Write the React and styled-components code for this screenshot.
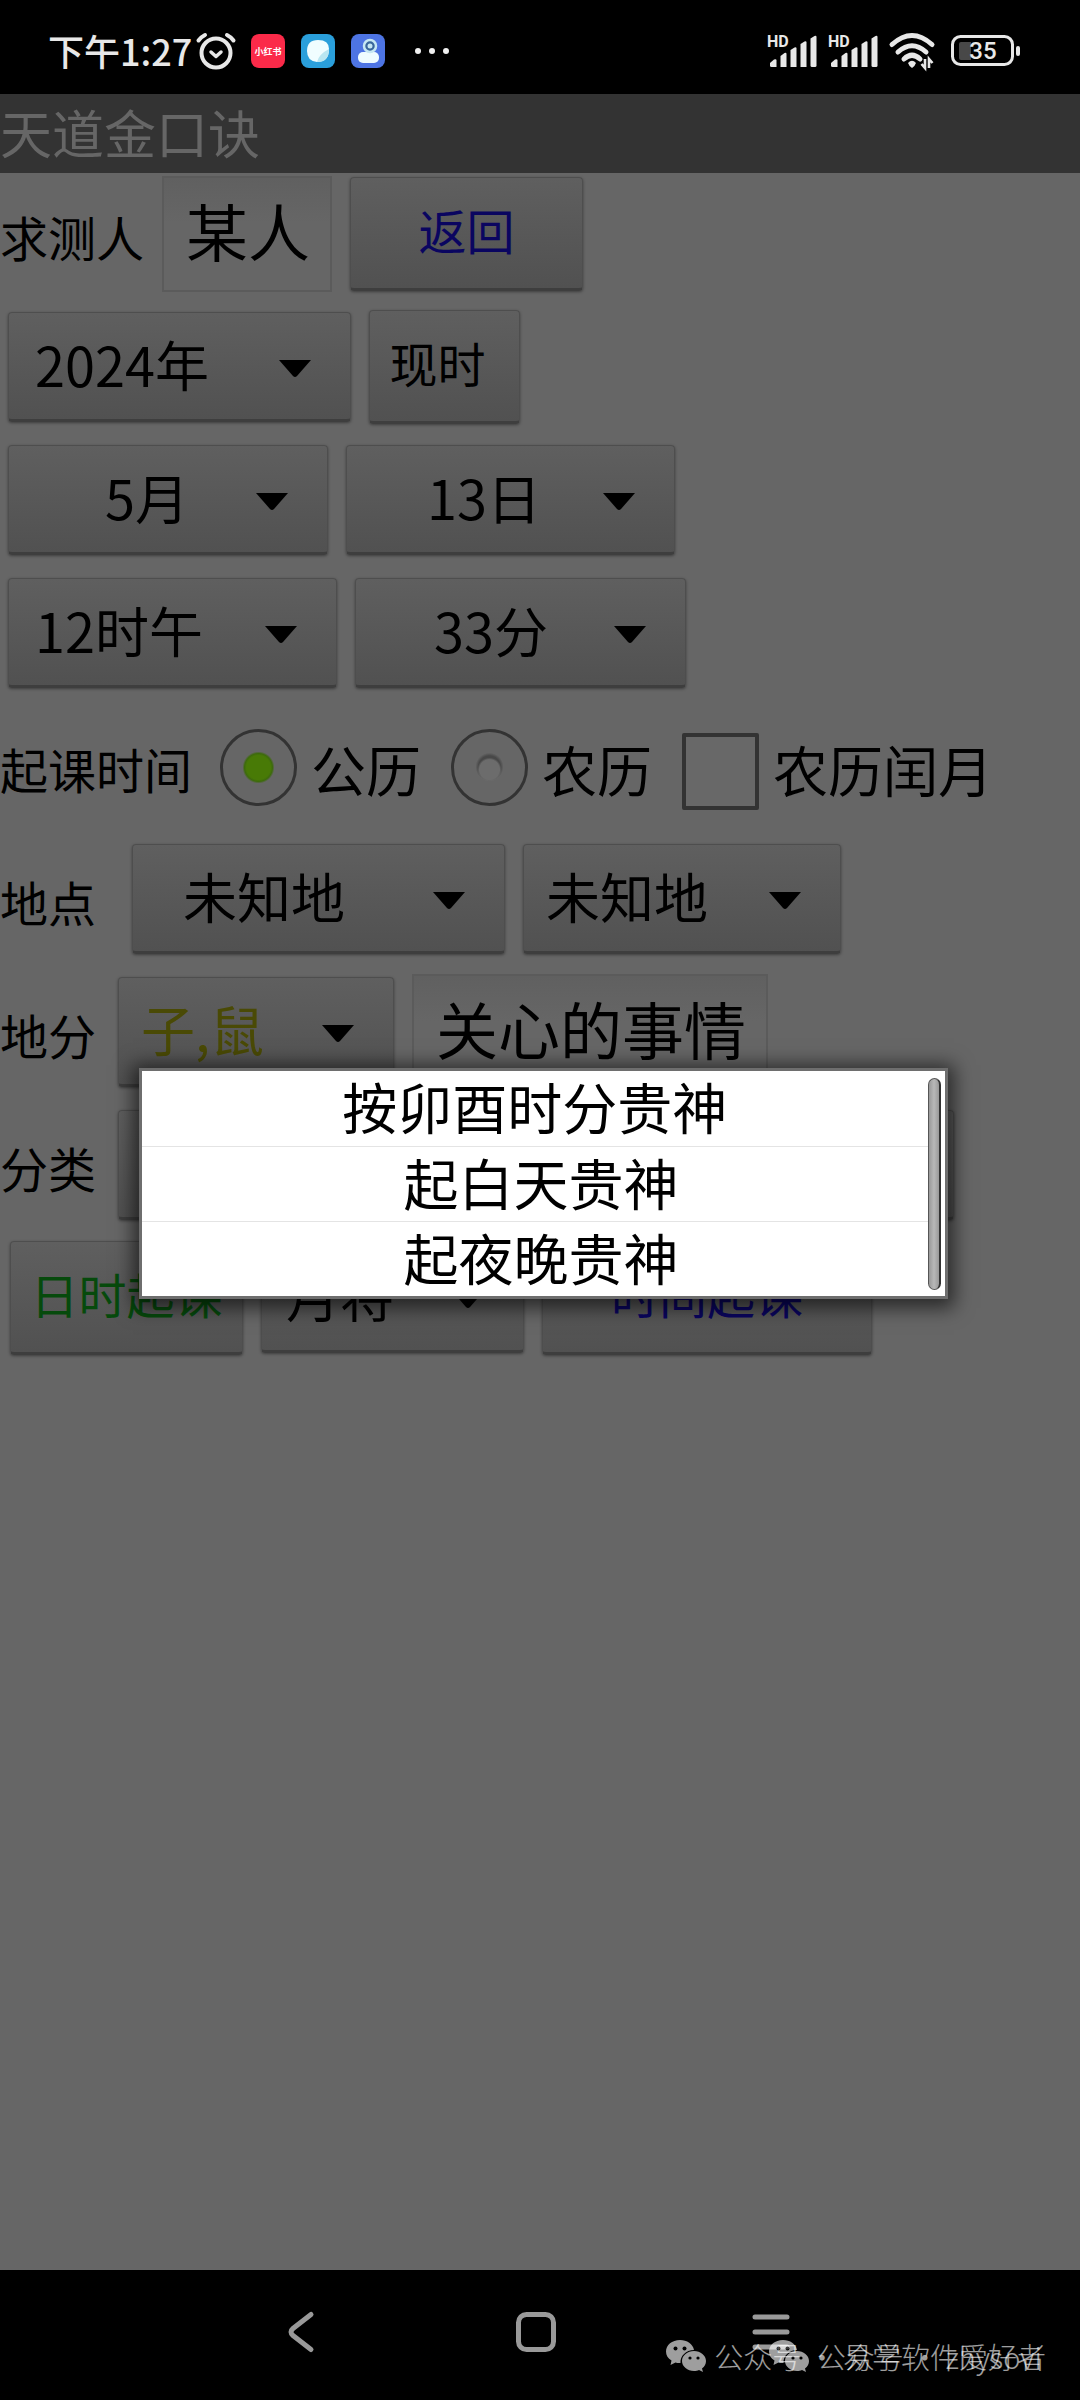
import { useState } from "react";
import styled, { createGlobalStyle } from "styled-components";

function StatusIcons() {
  return (
    <Icons>
      <Signal />
      <Signal />
      <svg width="48" height="38" viewBox="0 0 48 38" fill="none">
        <g stroke="#e8e8e8" strokeWidth="5" strokeLinecap="round">
          <path d="M3 12.500Q23 -5.500 43 12.500" />
          <path d="M9 20Q23 7.500 37 20" />
          <path d="M15 27Q23 19.500 31 27" />
        </g>
        <path d="M19 31Q23 26.500 27 31Q26 34 23 36Q20 34 19 31Z" fill="#e8e8e8" />
        <path
          d="M36 27V36L32.500 32M40 36V27L43.500 31"
          stroke="#e8e8e8"
          strokeWidth="2.600"
        />
      </svg>
      <svg width="70" height="32" viewBox="0 0 70 32">
        <rect x="1.500" y="1.500" width="60" height="28" rx="8" fill="none" stroke="#e8e8e8" strokeWidth="3" />
        <path d="M8 9Q8 7 10 7H20V25H10Q8 25 8 23Z" fill="#484848" />
        <rect x="65" y="11" width="4" height="10" rx="2" fill="#e8e8e8" />
        <text x="32" y="24" textAnchor="middle" fontFamily="Roboto, sans-serif" fontWeight="500" fontSize="24" fill="#e8e8e8">
          35
        </text>
      </svg>
    </Icons>
  );
}

function Signal() {
  return (
    <svg width="50" height="38" viewBox="0 -2 50 38">
      <text x="0" y="13" fontFamily="Roboto, sans-serif" fontWeight="700" fontSize="16" fill="#e8e8e8">
        HD
      </text>
      <g fill="#e8e8e8">
        <path d="M3 29L7 25.500Q9.500 24.500 9.500 26.500V33H4.500Q3 33 3 31.500Z" />
        <path d="M13.500 22L17.500 19Q19.500 18 19.500 20V33H13.500Z" />
        <path d="M23.500 16L27.500 13.500Q29.500 12.500 29.500 14.500V33H23.500Z" />
        <path d="M33.500 10L37.500 7.500Q39.500 6.500 39.500 8.500V33H33.500Z" />
        <path d="M43.500 4.500L47.500 2Q49.500 1 49.500 3V31.500Q49.500 33 48 33H45Q43.500 33 43.500 31.500Z" />
      </g>
    </svg>
  );
}

function AlarmIcon() {
  return (
    <svg width="40" height="38" viewBox="0 0 40 38" fill="none" stroke="#e8e8e8" strokeLinecap="round" strokeLinejoin="round">
      <circle cx="20" cy="21" r="14.500" strokeWidth="4" />
      <path d="M2.500 8.500Q5 5 9 3M37.500 8.500Q35 5 31 3" strokeWidth="4" />
      <path d="M15 20L20 24.500L25 20" strokeWidth="3.500" />
    </svg>
  );
}

function AppBadges() {
  return (
    <svg width="200" height="34" viewBox="0 0 200 34">
      <rect width="34" height="34" rx="8" fill="#fb2a49" />
      <text x="17" y="21" textAnchor="middle" fontFamily="'Noto Sans CJK SC', sans-serif" fontWeight="700" fontSize="9" fill="#fff">
        小红书
      </text>
      <rect x="50" width="34" height="34" rx="8" fill="#2a9fdb" />
      <path d="M56 17Q56 6 67 6Q78 6 78 15Q78 28 66 28Q56 27 56 17Z" fill="#f0fdff" />
      <path d="M78 15Q78 28 66 28Q68 20 78 15Z" fill="#b9e6f1" />
      <rect x="100" width="34" height="34" rx="8" fill="#4d74e3" />
      <rect x="107" y="18" width="21" height="11" rx="5" fill="#effcff" />
      <circle cx="119" cy="12" r="6" fill="#38669b" stroke="#c6e7f2" strokeWidth="2.500" />
      <circle cx="119" cy="12" r="2.500" fill="#c6e7f2" />
      <g fill="#f0f0f0">
        <circle cx="167" cy="17" r="3" />
        <circle cx="181" cy="17" r="3" />
        <circle cx="195" cy="17" r="3" />
      </g>
    </svg>
  );
}

function WechatIcon() {
  return (
    <svg width="42" height="34" viewBox="0 0 42 34">
      <path d="M15 1C7 1 1 6 1 12.500C1 16.500 3 19.500 6.500 21.500L5.500 26L10.500 23.500C12 24 14 24.200 15.500 24C15 17 21 11 29 11C28 5 22 1 15 1Z" fill="#fff" />
      <path d="M29 12C22.500 12 17 16.500 17 22C17 27.500 22.500 32 29 32C31 32 32.500 31.700 34 31L38 33L37 29.500C39.500 27.500 41 25 41 22C41 16.500 35.500 12 29 12Z" fill="#fff" />
      <g fill="#000">
        <circle cx="10.500" cy="9.500" r="2" />
        <circle cx="19.500" cy="9.500" r="2" />
        <circle cx="25" cy="19" r="1.600" />
        <circle cx="33" cy="19" r="1.600" />
      </g>
    </svg>
  );
}

function Spinner({ label, value, width, indent, color }) {
  return (
    <SpinnerBox $width={width}>
      <SpinnerSelect aria-label={label} $indent={indent} $color={color} defaultValue={value}>
        <option>{value}</option>
      </SpinnerSelect>
      <Arrow width="32" height="18" viewBox="0 0 32 18">
        <path d="M0 0H32L18 16Q16 18 14 16Z" fill="#000" />
      </Arrow>
    </SpinnerBox>
  );
}

const choices = ["按卯酉时分贵神 ", "起白天贵神", "起夜晚贵神"];

function App() {
  const [calendar, setCalendar] = useState("公历");

  return (
    <Page>
      <GlobalStyle />
      <StatusBar>
        <Clock>
          <span>下午1:27</span>
          <AlarmIcon />
          <AppBadges />
        </Clock>
        <StatusIcons />
      </StatusBar>
      <TitleBar>天道金口诀</TitleBar>

      <Form>
        <Row>
          <Label htmlFor="person">求测人</Label>
          <Field id="person" $width={170} defaultValue="某人" />
          <PushButton type="button" $width={233} $color="#0a0560">
            返回
          </PushButton>
        </Row>
        <Row $inset={8}>
          <Spinner label="年" value="2024年" width={343} indent={26} />
          <PushButton type="button" $width={151} $trail={14}>
            现时
          </PushButton>
        </Row>
        <Row $inset={8}>
          <Spinner label="月" value="5月" width={320} indent={96} />
          <Spinner label="日" value="13日" width={329} indent={80} />
        </Row>
        <Row $inset={8}>
          <Spinner label="时" value="12时午" width={329} indent={26} />
          <Spinner label="分" value="33分" width={331} indent={78} />
        </Row>
        <Row>
          <Label as="span" $gap={10}>
            起课时间
          </Label>
          {["公历", "农历"].map((name) => (
            <Option key={name}>
              <Radio
                type="radio"
                name="calendar"
                checked={calendar === name}
                onChange={() => setCalendar(name)}
              />
              <span>{name}</span>
            </Option>
          ))}
          <Option>
            <Check type="checkbox" />
            <span>农历闰月</span>
          </Option>
        </Row>
        <Row>
          <Label as="span" $gap={18}>
            地点
          </Label>
          <Spinner label="省" value="未知地" width={373} indent={50} />
          <Spinner label="市" value="未知地" width={318} indent={22} />
        </Row>
        <Row>
          <Label as="span" $gap={4}>
            地分
          </Label>
          <Spinner label="地分" value="子,鼠" width={276} indent={22} color="#4a4a05" />
          <Field aria-label="事情" $width={356} defaultValue="关心的事情" />
        </Row>
        <Row>
          <Label as="span" $gap={4}>
            分类
          </Label>
          <Spinner label="分类" value="" width={836} indent={22} />
        </Row>
        <Row $inset={10}>
          <PushButton type="button" $width={233} $color="#064a0c">
            日时起课
          </PushButton>
          <Spinner label="月将" value="月将" width={263} indent={24} />
          <PushButton type="button" $width={330} $color="#0a0560">
            时间起课
          </PushButton>
        </Row>

        <Popup>
          <Choices>
            {choices.map((choice) => (
              <li key={choice}>
                <Choice type="button">{choice}</Choice>
              </li>
            ))}
          </Choices>
          <ScrollThumb />
        </Popup>
      </Form>

      <NavBar>
        <NavButton type="button" aria-label="返回上一页">
          <svg width="42" height="42" viewBox="0 0 42 42" fill="none" stroke="#999" strokeWidth="5" strokeLinecap="round">
            <path d="M31 3.500L13 17.500Q9 21 13 24.500L31 38.500" />
          </svg>
        </NavButton>
        <NavButton type="button" aria-label="主屏幕">
          <svg width="42" height="42" viewBox="0 0 42 42" fill="none" stroke="#999" strokeWidth="5">
            <rect x="3.500" y="3.500" width="35" height="35" rx="8" />
          </svg>
        </NavButton>
        <NavButton type="button" aria-label="菜单">
          <svg width="42" height="42" viewBox="0 0 42 42" stroke="#999" strokeWidth="5" strokeLinecap="round">
            <path d="M5 6H37M5 21H37M5 36H37" />
          </svg>
        </NavButton>
        <Watermark $right={34}>
          <WechatIcon />
          <span>公众号 · 易学软件爱好者</span>
        </Watermark>
        <Watermark $right={38}>
          <WechatIcon />
          <span>公众号 · zhysovi</span>
        </Watermark>
      </NavBar>
    </Page>
  );
}

const GlobalStyle = createGlobalStyle`
  * {
    box-sizing: border-box;
  }
  body {
    margin: 0;
    background: #666;
  }
  body, button, input, select {
    font-family: "Noto Sans CJK SC", sans-serif;
  }
  svg {
    display: block;
    flex-shrink: 0;
    overflow: visible;
  }
`;

const Page = styled.div`
  min-height: 100vh;
  display: flex;
  flex-direction: column;
  background: #666;
  color: #000;
`;

const StatusBar = styled.header`
  height: 94px;
  padding: 8px 59px 0 48px;
  display: flex;
  align-items: center;
  justify-content: space-between;
  background: #000;
  color: #e8e8e8;
`;

const Clock = styled.div`
  display: flex;
  align-items: center;
  font-size: 36px;
  line-height: 48px;
  font-weight: 500;

  span {
    padding-bottom: 3px;
  }
  svg + svg {
    margin-left: 15px;
  }
  span + svg {
    margin-left: 4px;
  }
`;

const Icons = styled.div`
  display: flex;
  align-items: center;
  gap: 11px;

  svg:last-child {
    margin-left: 3px;
  }
`;

const TitleBar = styled.h1`
  margin: 0;
  height: 79px;
  background: #333;
  color: #666;
  font-size: 52px;
  line-height: 76px;
  font-weight: 400;
`;

const Form = styled.main`
  position: relative;
  flex: 1;
  padding-top: 2px;
  display: flex;
  flex-direction: column;
  gap: 16px;
`;

const Row = styled.div`
  height: 117px;
  padding-left: ${({ $inset }) => $inset || 0}px;
  display: flex;
  align-items: center;
  gap: 18px;
`;

const Label = styled.label`
  margin-right: ${({ $gap }) => $gap || 0}px;
  padding-top: 4px;
  font-size: 48px;
  line-height: 60px;
  white-space: nowrap;
`;

const Field = styled.input`
  width: ${({ $width }) => $width}px;
  height: 116px;
  padding: 0 20px 8px 22px;
  border: 2px solid #5b5b5b;
  border-radius: 0;
  outline: none;
  background: linear-gradient(#606060, #666 40%);
  color: #000;
  font-size: 62px;
`;

const PushButton = styled.button`
  width: ${({ $width }) => $width}px;
  height: 114px;
  padding: 0 ${({ $trail }) => $trail || 0}px 8px 0;
  border: 1px solid #4e4e4e;
  border-bottom: 3px solid #3e3e3e;
  border-radius: 4px;
  background: linear-gradient(#5f5f5f, #515151);
  box-shadow: 0 1px 3px rgba(0, 0, 0, 0.4);
  color: ${({ $color }) => $color || "#000"};
  font-size: 48px;
  white-space: nowrap;
`;

const SpinnerBox = styled.div`
  position: relative;
  width: ${({ $width }) => $width}px;
`;

const SpinnerSelect = styled.select`
  display: block;
  width: 100%;
  height: 110px;
  padding: 0 72px 4px ${({ $indent }) => $indent}px;
  appearance: none;
  border: 1px solid #4e4e4e;
  border-bottom: 3px solid #3e3e3e;
  border-radius: 4px;
  outline: none;
  background: linear-gradient(#5f5f5f, #515151);
  box-shadow: 0 1px 3px rgba(0, 0, 0, 0.4);
  color: ${({ $color }) => $color || "#000"};
  font-size: 54px;
`;

const Arrow = styled.svg`
  position: absolute;
  right: 40px;
  top: 48px;
  pointer-events: none;
`;

const Option = styled.label`
  margin-right: 12px;
  display: flex;
  align-items: center;
  gap: 14px;
  font-size: 55px;
  line-height: 68px;
  white-space: nowrap;

  span {
    padding-top: 4px;
  }
`;

const Radio = styled.input`
  appearance: none;
  width: 77px;
  height: 77px;
  margin: 4px 0 0;
  border: 3px solid #333;
  border-radius: 50%;
  background: radial-gradient(circle at 50% 53%, #6c6c6c 0 10px, transparent 12px),
    radial-gradient(circle at 50% 49%, #484848 0 11px, #666 14px);

  &:checked {
    background: radial-gradient(circle, #487a06 0 12px, #3d6a0c 14px, #666 16px);
  }
`;

const Check = styled.input`
  appearance: none;
  width: 77px;
  height: 77px;
  margin: 12px 0 0;
  border: 4px solid #333;
  border-radius: 2px;
  background: #686868;
`;

const Popup = styled.div`
  position: absolute;
  top: 895px;
  left: 139px;
  right: 132px;
  padding-right: 5px;
  border: 3px solid #6e6e6e;
  background: #fff;
  box-shadow: 0 3px 18px 6px rgba(0, 0, 0, 0.6);
`;

const Choices = styled.ul`
  margin: 0;
  padding: 0;
  list-style: none;

  li {
    height: 75px;
  }
  li + li {
    border-top: 1px solid #e4e4e4;
  }
`;

const Choice = styled.button`
  width: 100%;
  height: 74px;
  padding: 0;
  display: grid;
  justify-content: center;
  align-content: start;
  border: none;
  background: #fff;
  color: #000;
  font-size: 55px;
  line-height: 68px;
  white-space: pre;
`;

const ScrollThumb = styled.div`
  position: absolute;
  top: 7px;
  right: 4px;
  bottom: 6px;
  width: 13px;
  border: 1px solid #555;
  border-right: 2px solid #333;
  border-radius: 7px;
  background: linear-gradient(90deg, #999, #b8b8b8 50%, #999);
`;

const NavBar = styled.nav`
  position: relative;
  height: 130px;
  padding: 0 191px 6px 183px;
  display: grid;
  grid-template-columns: repeat(3, 1fr);
  align-items: center;
  justify-items: center;
  background: #000;
`;

const NavButton = styled.button`
  padding: 0;
  border: none;
  background: none;
`;

const Watermark = styled.div`
  position: absolute;
  right: ${({ $right }) => $right}px;
  bottom: 22px;
  display: flex;
  align-items: center;
  gap: 7px;
  color: #fff;
  font-size: 29px;
  line-height: 44px;
  font-weight: 300;
  white-space: nowrap;
  opacity: 0.62;
`;

export default App;
